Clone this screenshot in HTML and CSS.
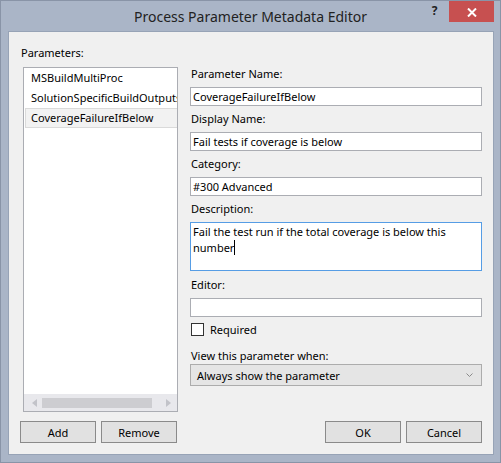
FILE: index.html
```html
<!DOCTYPE html>
<html>
<head>
  <title>Process Parameter Metadata Editor</title>
  <link rel="stylesheet" href="styles.css">
</head>
<body>
  <div class="window">
    <div class="titlebar">
      <span class="title">Process Parameter Metadata Editor</span>
      <div class="caption-buttons">
        <span class="caption-help">?</span>
        <span class="caption-close">
          <svg width="10" height="9" viewBox="0 0 10 9">
            <path d="M1 0.5 L9 8.5 M9 0.5 L1 8.5" stroke="#fff" stroke-width="2" fill="none"/>
          </svg>
        </span>
      </div>
    </div>

    <div class="client">
      <!-- parameter list -->
      <div class="pane-left">
        <div class="label">Parameters:</div>
        <div class="listbox">
          <div class="list-items">
            <div class="list-item">MSBuildMultiProc</div>
            <div class="list-item">SolutionSpecificBuildOutputs</div>
            <div class="list-item selected">CoverageFailureIfBelow</div>
          </div>
          <div class="hscroll">
            <svg class="hscroll-arrow" width="5" height="8" viewBox="0 0 5 8"><polygon points="5,0 5,8 0,4" fill="#c2c3c9"/></svg>
            <div class="hscroll-track"><div class="hscroll-thumb"></div></div>
            <svg class="hscroll-arrow" width="5" height="8" viewBox="0 0 5 8"><polygon points="0,0 0,8 5,4" fill="#c2c3c9"/></svg>
          </div>
        </div>
        <div class="button-row">
          <button class="button">Add</button>
          <button class="button">Remove</button>
        </div>
      </div>

      <!-- parameter details -->
      <div class="pane-right">
        <div class="label">Parameter Name:</div>
        <div class="textbox">CoverageFailureIfBelow</div>

        <div class="label">Display Name:</div>
        <div class="textbox">Fail tests if coverage is below</div>

        <div class="label">Category:</div>
        <div class="textbox">#300 Advanced</div>

        <div class="label">Description:</div>
        <div class="textbox textarea focused">Fail the test run if the total coverage is below this number<span class="caret"></span></div>

        <div class="label">Editor:</div>
        <div class="textbox"></div>

        <div class="check-row">
          <span class="checkbox"></span>
          <span>Required</span>
        </div>

        <div class="label label-combo">View this parameter when:</div>
        <div class="combobox">
          <span>Always show the parameter</span>
          <svg width="7" height="4" viewBox="0 0 7 4"><polyline points="0.5,0.5 3.5,3.5 6.5,0.5" stroke="#8a8a8a" fill="none"/></svg>
        </div>

        <div class="button-row dialog-buttons">
          <button class="button">OK</button>
          <button class="button">Cancel</button>
        </div>
      </div>
    </div>
  </div>
</body>
</html>
```

FILE: styles.css
```css
* {
  margin: 0;
  padding: 0;
  box-sizing: border-box;
}

body {
  font-family: "Noto Sans", "Liberation Sans", sans-serif;
  font-size: 11px;
  line-height: 15px;
  color: #000;
  background: #fff;
}

/* Window frame */
.window {
  width: 501px;
  height: 463px;
  background: #aab5c7;
  border: 1px solid #8994a7;
  display: flex;
  flex-direction: column;
}

.titlebar {
  height: 30px;
  display: grid;
  grid-template-columns: 1fr auto 1fr;
  align-items: start;
}

.title {
  grid-column: 2;
  font-size: 14px;
  line-height: 19px;
  padding-top: 6px;
  color: #222;
  white-space: nowrap;
}

.caption-buttons {
  grid-column: 3;
  justify-self: end;
  display: flex;
  margin-right: 6px;
}

.caption-help {
  width: 29px;
  height: 21px;
  text-align: center;
  font-size: 12px;
  font-weight: bold;
  line-height: 18px;
  padding-top: 1px;
  color: #222;
}

.caption-close {
  width: 45px;
  height: 21px;
  background: #c75050;
  display: flex;
  align-items: center;
  justify-content: center;
  padding-top: 1px;
}

.client {
  flex: 1;
  margin: 0 6px 7px 7px;
  background: #f0f0f0;
  border: 1px solid #97a3b6;
  display: flex;
  gap: 12px;
  padding: 13px 11px 11px 11px;
}

.label {
  padding-left: 1px;
  white-space: nowrap;
}

/* Left column: list of parameters */
.pane-left {
  width: 158px;
  display: flex;
  flex-direction: column;
}

.listbox {
  flex: 1;
  margin: 7px 0 9px 3px;
  width: 155px;
  background: #fff;
  border: 1px solid #abadb3;
  display: flex;
  flex-direction: column;
}

.list-items {
  flex: 1;
  overflow: hidden;
  padding-left: 1px;
}

.list-item {
  width: 170px;
  height: 20px;
  line-height: 18px;
  padding-left: 5px;
  border: 1px solid transparent;
  white-space: nowrap;
}

.list-item.selected {
  background: #f2f2f2;
  border-color: #dadada;
}

.hscroll {
  height: 17px;
  background: #e8e8ec;
  display: flex;
  align-items: center;
  padding: 0 6px 0 8px;
  gap: 5px;
}

.hscroll-track {
  flex: 1;
  height: 17px;
  display: flex;
  align-items: center;
}

.hscroll-thumb {
  width: 110px;
  height: 10px;
  background: #cdcdd1;
}

/* Buttons */
.button-row {
  display: flex;
  gap: 5px;
}

.button {
  width: 76px;
  height: 22px;
  font-family: inherit;
  font-size: 11px;
  color: #000;
  background: #e1e1e1;
  border: 1px solid #8a8a8a;
}

/* Right column: parameter fields */
.pane-right {
  flex: 1;
  display: flex;
  flex-direction: column;
  padding-top: 21px;
}

.pane-right .label {
  margin-bottom: 6px;
}

.textbox {
  height: 19px;
  margin-bottom: 5px;
  padding: 0 2px;
  line-height: 17px;
  background: #fff;
  border: 1px solid #abadb3;
  white-space: nowrap;
}

.textarea {
  height: 49px;
  margin-bottom: 6px;
  padding-top: 1px;
  line-height: 16px;
  white-space: normal;
}

.textbox.focused {
  border-color: #569de5;
}

.caret {
  display: inline-block;
  width: 1px;
  height: 15px;
  background: #000;
  vertical-align: -3px;
}

.check-row {
  display: flex;
  align-items: center;
  gap: 6px;
  padding-left: 1px;
  height: 15px;
}

.checkbox {
  width: 13px;
  height: 13px;
  background: #fff;
  border: 1px solid #333;
}

.pane-right .label-combo {
  margin-top: 11px;
  margin-bottom: 1px;
}

.combobox {
  height: 22px;
  display: flex;
  align-items: center;
  justify-content: space-between;
  padding: 0 8px 0 6px;
  background: #e5e5e5;
  border: 1px solid #acacac;
}

.dialog-buttons {
  margin-top: auto;
  justify-content: flex-end;
}
```
